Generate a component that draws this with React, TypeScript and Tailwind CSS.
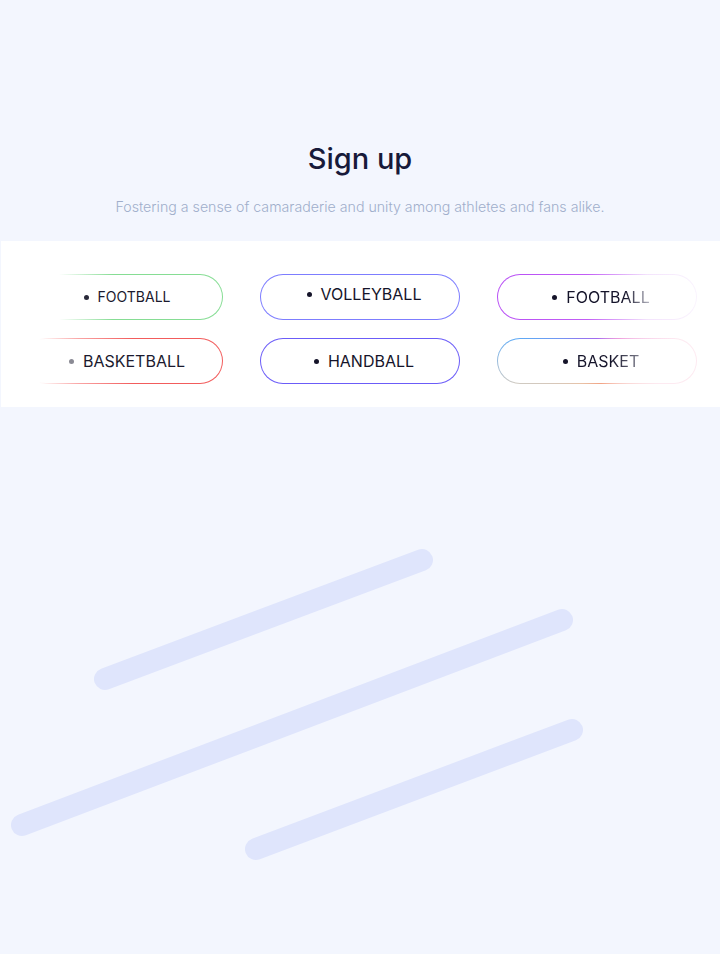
const font = "font-['Inter','Noto_Sans',sans-serif]";

type Pill = {
  label: string;
  border: string;
  text: string;
  dot: string;
  size: string;
  lift?: boolean;
};

const pills: Pill[] = [
  {
    label: "FOOTBALL",
    border: "bg-[linear-gradient(to_right,rgba(134,221,148,0)_18%,#86dd94_45%,#86dd94)]",
    text: "text-[#1b1a2e]",
    dot: "bg-[#2a2a3a]",
    size: "text-sm",
  },
  {
    label: "VOLLEYBALL",
    border: "bg-[#7d7dff]",
    text: "text-[#15142a]",
    dot: "bg-[#15142a]",
    size: "text-base",
    lift: true,
  },
  {
    label: "FOOTBALL",
    border: "bg-[linear-gradient(to_right,#b84ff5,#c25ef5_45%,rgba(232,200,250,0.5)_75%,rgba(246,236,252,0.6))]",
    text: "bg-[linear-gradient(to_right,#15142a_70%,#b9b9c4)] bg-clip-text text-transparent",
    dot: "bg-[#15142a]",
    size: "text-base",
  },
  {
    label: "BASKETBALL",
    border: "bg-[linear-gradient(to_right,rgba(245,90,90,0)_8%,rgba(245,90,90,0.55)_28%,#f25c5c_55%,#f25c5c)]",
    text: "text-[#1b1a2e]",
    dot: "bg-[#8a8a94]",
    size: "text-base",
  },
  {
    label: "HANDBALL",
    border: "bg-[#6b5cf8]",
    text: "text-[#15142a]",
    dot: "bg-[#15142a]",
    size: "text-base",
  },
  {
    label: "BASKET",
    border:
      "bg-[conic-gradient(#a46af0_0deg,#ee9fde_45deg,#fdeaf1_75deg,#fdeaf1_110deg,#f2a384_170deg,#e9c2a6_215deg,#cfcac2_255deg,#5eaaf5_285deg,#8c7cf0_320deg,#a46af0_360deg)]",
    text: "bg-[linear-gradient(to_right,#15142a_55%,#7a7a88)] bg-clip-text text-transparent",
    dot: "bg-[#15142a]",
    size: "text-base",
  },
];

function SportPill({ p }: { p: Pill }) {
  return (
    <div className={`h-[46px] w-[200px] rounded-full p-px ${p.border}`}>
      <div className="flex h-full w-full items-center justify-center rounded-full bg-white pl-2">
        <div className={`flex items-center gap-[9px] ${p.lift ? "-mt-1.5" : ""}`}>
          <span className={`h-[5px] w-[5px] rounded-full ${p.dot}`} />
          <span className={`${p.size} font-normal ${p.text}`}>{p.label}</span>
        </div>
      </div>
    </div>
  );
}

export default function App() {
  return (
    <div className={`flex min-h-[954px] w-full flex-col bg-[#f3f6fe] ${font}`}>
      <div className="flex flex-col items-center pt-[139px]">
        <h1 className="text-[29px] font-medium leading-10 text-[#171a3a]">Sign up</h1>
        <p className="mt-[18px] text-[14.2px] font-light leading-5 text-[#a0aecb]">
          Fostering a sense of camaraderie and unity among athletes and fans alike.
        </p>
      </div>

      <div className="ml-px mt-[24px] grid h-[166px] grid-cols-[200px_200px_200px] content-start gap-x-[37px] gap-y-[18px] bg-white pl-[22px] pt-[33px]">
        {pills.map((p, i) => (
          <SportPill key={i} p={p} />
        ))}
      </div>

      <svg width="720" height="547" viewBox="0 0 720 547" className="block">
        <g stroke="#dfe5fc" strokeWidth="22" strokeLinecap="round">
          <line x1="105" y1="272" x2="422" y2="153" />
          <line x1="22" y1="418" x2="562" y2="213" />
          <line x1="256" y1="442" x2="572" y2="323" />
        </g>
      </svg>
    </div>
  );
}
